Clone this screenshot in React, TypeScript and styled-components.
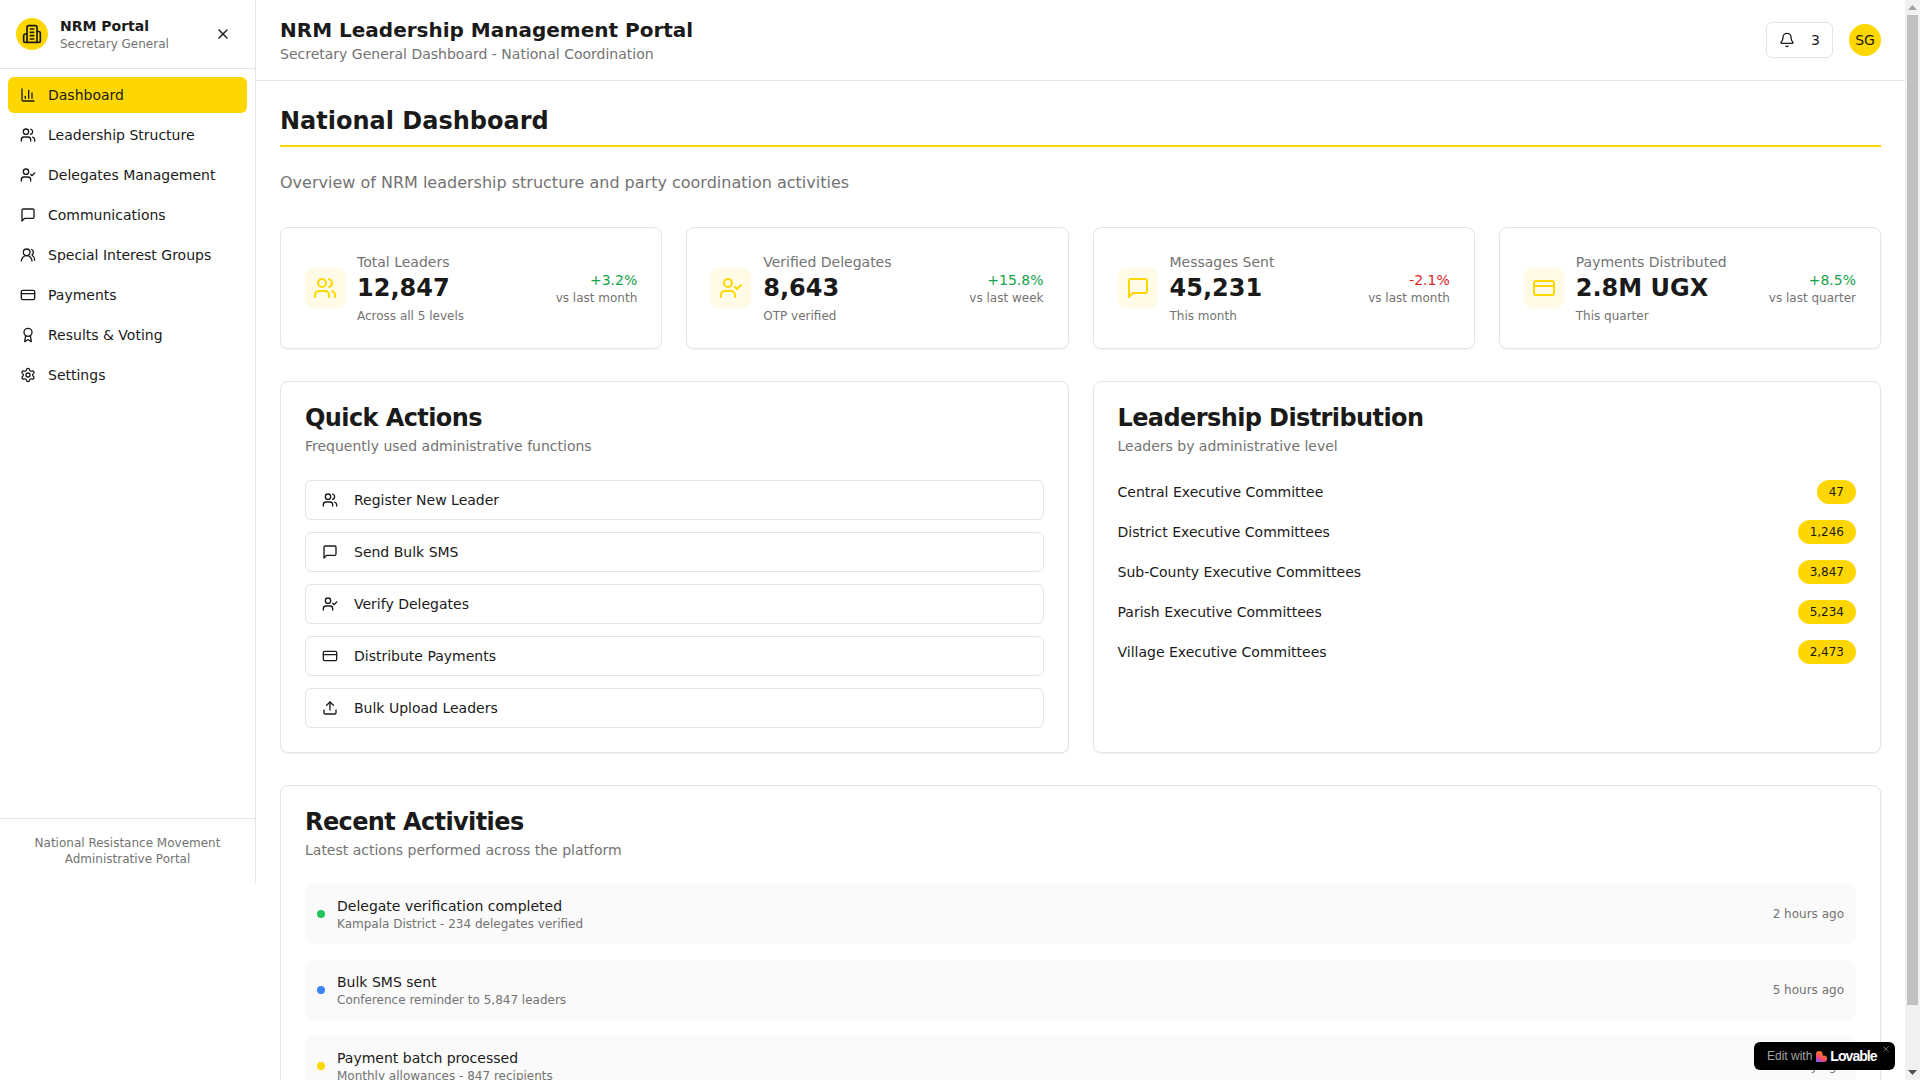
import React from "react";
import styled, { createGlobalStyle } from "styled-components";
import { Award, Bell, ChartColumn, CreditCard, Settings, Upload, UserCheck, Users, UsersRound, X } from "lucide-react";

const GlobalStyle = createGlobalStyle`
  * { box-sizing: border-box; }
  html, body { margin: 0; padding: 0; background: #fff; }
  body { font-family: "DejaVu Sans", sans-serif; color: #1a1a1a; font-size: 16px; line-height: 24px; }
  svg { display: block; flex-shrink: 0; }
`;

const MessageSquare = ({ size = 16 }: { size?: number }) => (
  <svg width={size} height={size} viewBox="0 0 24 24" fill="none" stroke="currentColor" strokeWidth="2" strokeLinecap="round" strokeLinejoin="round">
    <path d="M21 15a2 2 0 0 1-2 2H7l-4 4V5a2 2 0 0 1 2-2h14a2 2 0 0 1 2 2z" />
  </svg>
);

const BuildingIcon = () => (
  <svg width="20" height="20" viewBox="0 0 24 24" fill="none" stroke="currentColor" strokeWidth="2" strokeLinecap="round" strokeLinejoin="round">
    <path d="M6 22V4a2 2 0 0 1 2-2h8a2 2 0 0 1 2 2v18Z" />
    <path d="M6 12H4a2 2 0 0 0-2 2v6a2 2 0 0 0 2 2h2" />
    <path d="M18 9h2a2 2 0 0 1 2 2v9a2 2 0 0 1-2 2h-2" />
    <path d="M10 6h4" /><path d="M10 10h4" /><path d="M10 14h4" /><path d="M10 18h4" />
  </svg>
);

const Shell = styled.div`
  display: flex;
  align-items: flex-start;
  min-height: 100vh;
  padding-right: 15px;
`;

const Sidebar = styled.aside`
  width: 256px;
  height: 883px;
  flex-shrink: 0;
  display: flex;
  flex-direction: column;
  border-right: 1px solid #e5e5e5;
`;

const SideHeader = styled.div`
  display: flex;
  align-items: center;
  justify-content: space-between;
  padding: 16px;
  border-bottom: 1px solid #e5e5e5;
`;

const Brand = styled.div`
  display: flex;
  align-items: center;
  gap: 12px;
`;

const LogoCircle = styled.div`
  width: 32px;
  height: 32px;
  border-radius: 50%;
  background: #ffd700;
  display: flex;
  align-items: center;
  justify-content: center;
`;

const BrandName = styled.div`
  font-size: 14px;
  line-height: 20px;
  font-weight: 700;
`;

const BrandRole = styled.div`
  font-size: 12px;
  line-height: 16px;
  color: #737373;
`;

const CloseButton = styled.button`
  width: 32px;
  height: 32px;
  padding: 0;
  border: 0;
  background: none;
  color: #1a1a1a;
  display: flex;
  align-items: center;
  justify-content: center;
`;

const Nav = styled.nav`
  flex: 1;
  padding: 8px;
  display: flex;
  flex-direction: column;
  gap: 4px;
`;

const NavItem = styled.a<{ $active?: boolean }>`
  height: 36px;
  padding: 0 12px;
  display: flex;
  align-items: center;
  gap: 12px;
  border-radius: 6px;
  font-size: 14px;
  line-height: 20px;
  color: #1a1a1a;
  background: ${(p) => (p.$active ? "#ffd700" : "transparent")};
`;

const SideFooter = styled.div`
  padding: 16px;
  border-top: 1px solid #e5e5e5;
  font-size: 12px;
  line-height: 16px;
  color: #737373;
  text-align: center;
`;

const Main = styled.div`
  flex: 1;
  min-width: 0;
`;

const TopBar = styled.header`
  display: flex;
  align-items: center;
  justify-content: space-between;
  padding: 16px 24px;
  border-bottom: 1px solid #e5e5e5;
`;

const PortalTitle = styled.h1`
  margin: 0;
  font-size: 20px;
  line-height: 28px;
  font-weight: 700;
`;

const PortalSub = styled.p`
  margin: 0;
  font-size: 14px;
  line-height: 20px;
  color: #737373;
`;

const TopActions = styled.div`
  display: flex;
  align-items: center;
  gap: 16px;
`;

const BellButton = styled.button`
  height: 36px;
  padding: 0 12px;
  display: flex;
  align-items: center;
  gap: 16px;
  background: #fff;
  color: #1a1a1a;
  border: 1px solid #e5e5e5;
  border-radius: 6px;
  font: 400 14px/20px "DejaVu Sans", sans-serif;
`;

const Avatar = styled.div`
  width: 32px;
  height: 32px;
  border-radius: 50%;
  background: #ffd700;
  display: flex;
  align-items: center;
  justify-content: center;
  font-size: 14px;
  line-height: 20px;
`;

const Content = styled.main`
  padding: 24px;
`;

const PageTitle = styled.h2`
  margin: 0;
  padding-bottom: 8px;
  border-bottom: 2px solid #ffd700;
  font-size: 24px;
  line-height: 32px;
  font-weight: 700;
`;

const PageLead = styled.p`
  margin: 24px 0 32px;
  font-size: 16px;
  line-height: 24px;
  color: #737373;
`;

const StatGrid = styled.div`
  display: grid;
  grid-template-columns: repeat(4, 1fr);
  gap: 24px;
  margin-bottom: 32px;
`;

const Card = styled.section`
  background: #fff;
  border: 1px solid #e5e5e5;
  border-radius: 8px;
  box-shadow: 0 1px 2px rgba(0, 0, 0, 0.05);
`;

const StatCard = styled(Card)`
  padding: 24px;
  display: flex;
  align-items: center;
  justify-content: space-between;
`;

const StatLeft = styled.div`
  display: flex;
  align-items: center;
  gap: 12px;
`;

const StatIcon = styled.div`
  width: 40px;
  height: 40px;
  border-radius: 8px;
  background: #fffbe6;
  color: #ffd700;
  display: flex;
  align-items: center;
  justify-content: center;
`;

const StatLabel = styled.div`
  font-size: 14px;
  line-height: 20px;
  color: #737373;
`;

const StatValue = styled.div`
  font-size: 24px;
  line-height: 32px;
  font-weight: 700;
`;

const StatNote = styled.div`
  margin-top: 4px;
  font-size: 12px;
  line-height: 16px;
  color: #737373;
`;

const StatRight = styled.div`
  text-align: right;
`;

const Trend = styled.div<{ $down?: boolean }>`
  font-size: 14px;
  line-height: 20px;
  color: ${(p) => (p.$down ? "#dc2626" : "#16a34a")};
`;

const TrendNote = styled.div`
  font-size: 12px;
  line-height: 16px;
  color: #737373;
`;

const TwoColumns = styled.div`
  display: grid;
  grid-template-columns: repeat(2, 1fr);
  gap: 24px;
  margin-bottom: 32px;
`;

const CardHead = styled.div`
  padding: 24px 24px 24px;
  display: flex;
  flex-direction: column;
  gap: 6px;
`;

const CardTitle = styled.h3`
  margin: 0;
  font-size: 24px;
  line-height: 24px;
  font-weight: 700;
  letter-spacing: -0.6px;
`;

const CardDesc = styled.p`
  margin: 0;
  font-size: 14px;
  line-height: 20px;
  color: #737373;
`;

const CardBody = styled.div<{ $gap: number }>`
  padding: 0 24px 24px;
  display: flex;
  flex-direction: column;
  gap: ${(p) => p.$gap}px;
`;

const ActionButton = styled.button`
  height: 40px;
  padding: 0 16px;
  display: flex;
  align-items: center;
  gap: 16px;
  background: #fff;
  color: #1a1a1a;
  border: 1px solid #e5e5e5;
  border-radius: 6px;
  font: 400 14px/20px "DejaVu Sans", sans-serif;
  text-align: left;
`;

const LevelRow = styled.div`
  display: flex;
  align-items: center;
  justify-content: space-between;
  font-size: 14px;
  line-height: 20px;
`;

const CountBadge = styled.span`
  padding: 4px 12px;
  border-radius: 9999px;
  background: #ffd700;
  font-size: 12px;
  line-height: 16px;
`;

const ActivityRow = styled.div`
  padding: 12px;
  border-radius: 8px;
  background: #fafafa;
  display: flex;
  align-items: center;
  justify-content: space-between;
`;

const ActivityLeft = styled.div`
  display: flex;
  align-items: center;
  gap: 12px;
`;

const Dot = styled.span<{ $color: string }>`
  width: 8px;
  height: 8px;
  border-radius: 50%;
  background: ${(p) => p.$color};
`;

const ActivityTitle = styled.div`
  font-size: 14px;
  line-height: 20px;
`;

const ActivityNote = styled.div`
  font-size: 12px;
  line-height: 16px;
  color: #737373;
`;

const ActivityTime = styled.div`
  font-size: 12px;
  line-height: 16px;
  color: #737373;
`;

const ScrollTrack = styled.div`
  position: fixed;
  top: 0;
  right: 0;
  bottom: 0;
  width: 15px;
  display: flex;
  flex-direction: column;
  background: #f1f1f1;
`;

const ScrollArrow = styled.div`
  height: 15px;
  display: flex;
  align-items: center;
  justify-content: center;
  flex-shrink: 0;
`;

const ScrollLane = styled.div`
  flex: 1;
`;

const ScrollThumb = styled.div`
  height: 990px;
  margin: 0 2px;
  background: #c1c1c1;
`;

const LovableBadge = styled.div`
  position: fixed;
  right: 25px;
  bottom: 10px;
  width: 141px;
  height: 28px;
  padding-left: 13px;
  display: flex;
  align-items: center;
  background: #000;
  border-radius: 6px;
  font-family: "Liberation Sans", Arial, sans-serif;
  font-size: 12px;
  line-height: 16px;
  color: #a3a3a3;
`;

const LovableMark = styled.span`
  margin-left: 4px;
  margin-right: 3px;
`;

const LovableWord = styled.span`
  font-size: 14px;
  font-weight: 700;
  letter-spacing: -0.95px;
  color: #fff;
`;

const LovableClose = styled.span`
  position: absolute;
  top: 2px;
  right: 4px;
  color: #a3a3a3;
`;

const nav = [
  { label: "Dashboard", icon: <ChartColumn size={16} />, active: true },
  { label: "Leadership Structure", icon: <Users size={16} /> },
  { label: "Delegates Management", icon: <UserCheck size={16} /> },
  { label: "Communications", icon: <MessageSquare size={16} /> },
  { label: "Special Interest Groups", icon: <UsersRound size={16} /> },
  { label: "Payments", icon: <CreditCard size={16} /> },
  { label: "Results & Voting", icon: <Award size={16} /> },
  { label: "Settings", icon: <Settings size={16} /> },
];

const stats = [
  { label: "Total Leaders", value: "12,847", note: "Across all 5 levels", trend: "+3.2%", trendNote: "vs last month", icon: <Users size={24} /> },
  { label: "Verified Delegates", value: "8,643", note: "OTP verified", trend: "+15.8%", trendNote: "vs last week", icon: <UserCheck size={24} /> },
  { label: "Messages Sent", value: "45,231", note: "This month", trend: "-2.1%", trendNote: "vs last month", down: true, icon: <MessageSquare size={24} /> },
  { label: "Payments Distributed", value: "2.8M UGX", note: "This quarter", trend: "+8.5%", trendNote: "vs last quarter", icon: <CreditCard size={24} /> },
];

const actions = [
  { label: "Register New Leader", icon: <Users size={16} /> },
  { label: "Send Bulk SMS", icon: <MessageSquare size={16} /> },
  { label: "Verify Delegates", icon: <UserCheck size={16} /> },
  { label: "Distribute Payments", icon: <CreditCard size={16} /> },
  { label: "Bulk Upload Leaders", icon: <Upload size={16} /> },
];

const levels = [
  ["Central Executive Committee", "47"],
  ["District Executive Committees", "1,246"],
  ["Sub-County Executive Committees", "3,847"],
  ["Parish Executive Committees", "5,234"],
  ["Village Executive Committees", "2,473"],
];

const activities = [
  { title: "Delegate verification completed", note: "Kampala District - 234 delegates verified", time: "2 hours ago", color: "#22c55e" },
  { title: "Bulk SMS sent", note: "Conference reminder to 5,847 leaders", time: "5 hours ago", color: "#3b82f6" },
  { title: "Payment batch processed", note: "Monthly allowances - 847 recipients", time: "1 day ago", color: "#ffd700" },
];

export default function App() {
  return (
    <>
      <GlobalStyle />
      <Shell>
        <Sidebar>
          <SideHeader>
            <Brand>
              <LogoCircle><BuildingIcon /></LogoCircle>
              <div>
                <BrandName>NRM Portal</BrandName>
                <BrandRole>Secretary General</BrandRole>
              </div>
            </Brand>
            <CloseButton><X size={16} /></CloseButton>
          </SideHeader>
          <Nav>
            {nav.map((n) => (
              <NavItem key={n.label} $active={n.active}>
                {n.icon}
                {n.label}
              </NavItem>
            ))}
          </Nav>
          <SideFooter>
            National Resistance Movement
            <br />
            Administrative Portal
          </SideFooter>
        </Sidebar>
        <Main>
          <TopBar>
            <div>
              <PortalTitle>NRM Leadership Management Portal</PortalTitle>
              <PortalSub>Secretary General Dashboard - National Coordination</PortalSub>
            </div>
            <TopActions>
              <BellButton><Bell size={16} />3</BellButton>
              <Avatar>SG</Avatar>
            </TopActions>
          </TopBar>
          <Content>
            <PageTitle>National Dashboard</PageTitle>
            <PageLead>Overview of NRM leadership structure and party coordination activities</PageLead>
            <StatGrid>
              {stats.map((s) => (
                <StatCard key={s.label}>
                  <StatLeft>
                    <StatIcon>{s.icon}</StatIcon>
                    <div>
                      <StatLabel>{s.label}</StatLabel>
                      <StatValue>{s.value}</StatValue>
                      <StatNote>{s.note}</StatNote>
                    </div>
                  </StatLeft>
                  <StatRight>
                    <Trend $down={s.down}>{s.trend}</Trend>
                    <TrendNote>{s.trendNote}</TrendNote>
                  </StatRight>
                </StatCard>
              ))}
            </StatGrid>
            <TwoColumns>
              <Card>
                <CardHead>
                  <CardTitle>Quick Actions</CardTitle>
                  <CardDesc>Frequently used administrative functions</CardDesc>
                </CardHead>
                <CardBody $gap={12}>
                  {actions.map((a) => (
                    <ActionButton key={a.label}>{a.icon}{a.label}</ActionButton>
                  ))}
                </CardBody>
              </Card>
              <Card>
                <CardHead>
                  <CardTitle>Leadership Distribution</CardTitle>
                  <CardDesc>Leaders by administrative level</CardDesc>
                </CardHead>
                <CardBody $gap={16}>
                  {levels.map(([name, count]) => (
                    <LevelRow key={name}>
                      <span>{name}</span>
                      <CountBadge>{count}</CountBadge>
                    </LevelRow>
                  ))}
                </CardBody>
              </Card>
            </TwoColumns>
            <Card>
              <CardHead>
                <CardTitle>Recent Activities</CardTitle>
                <CardDesc>Latest actions performed across the platform</CardDesc>
              </CardHead>
              <CardBody $gap={16}>
                {activities.map((a) => (
                  <ActivityRow key={a.title}>
                    <ActivityLeft>
                      <Dot $color={a.color} />
                      <div>
                        <ActivityTitle>{a.title}</ActivityTitle>
                        <ActivityNote>{a.note}</ActivityNote>
                      </div>
                    </ActivityLeft>
                    <ActivityTime>{a.time}</ActivityTime>
                  </ActivityRow>
                ))}
              </CardBody>
            </Card>
          </Content>
        </Main>
      </Shell>
      <ScrollTrack>
        <ScrollArrow>
          <svg width="9" height="5" viewBox="0 0 9 5"><path d="M4.5 0 9 5H0z" fill="#a3a3a3" /></svg>
        </ScrollArrow>
        <ScrollThumb />
        <ScrollLane />
        <ScrollArrow>
          <svg width="9" height="5" viewBox="0 0 9 5"><path d="M0 0h9L4.5 5z" fill="#505050" /></svg>
        </ScrollArrow>
      </ScrollTrack>
      <LovableBadge>
        Edit with
        <LovableMark>
          <svg width="11" height="11" viewBox="0 0 10 10">
            <defs>
              <linearGradient id="lovable" x1="0.8" y1="0" x2="0.2" y2="1">
                <stop offset="0" stopColor="#ff7a1a" />
                <stop offset="0.4" stopColor="#fb6a3c" />
                <stop offset="0.7" stopColor="#f0437f" />
                <stop offset="1" stopColor="#7c5cf5" />
              </linearGradient>
            </defs>
            <path d="M3 0a3 3 0 0 1 3 3v1h1a3 3 0 0 1 0 6H0V3a3 3 0 0 1 3-3z" fill="url(#lovable)" />
          </svg>
        </LovableMark>
        <LovableWord>Lovable</LovableWord>
        <LovableClose><X size={10} strokeWidth={1.5} /></LovableClose>
      </LovableBadge>
    </>
  );
}
